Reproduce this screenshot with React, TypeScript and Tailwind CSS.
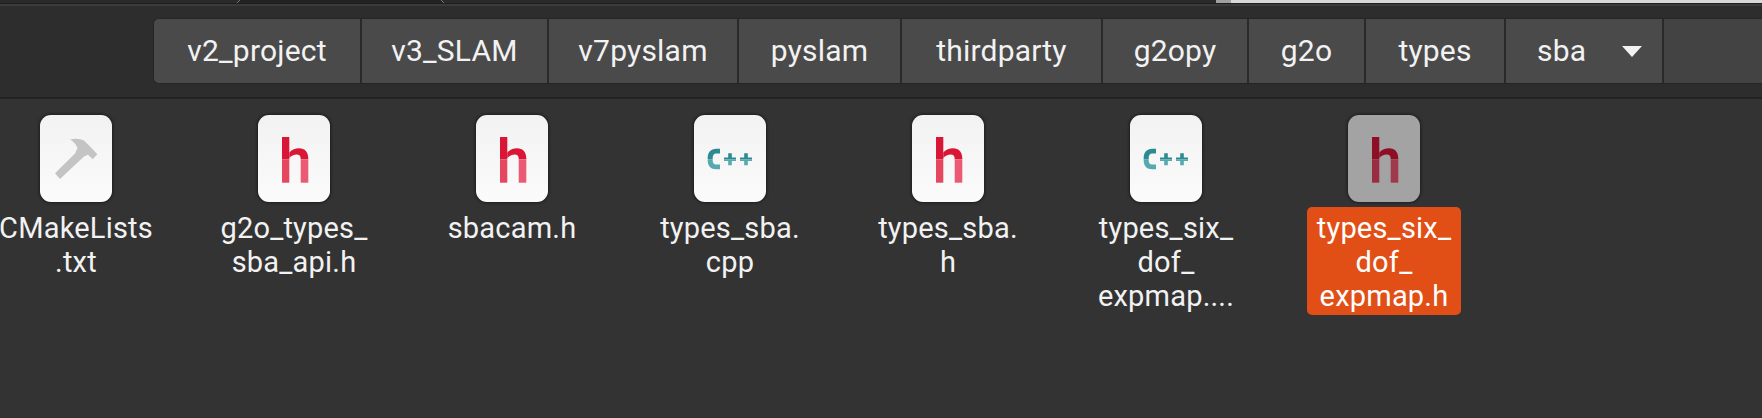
import React from 'react';

const segments = [
  { name: 'v2_project', width: 'w-[208px]' },
  { name: 'v3_SLAM', width: 'w-[187px]' },
  { name: 'v7pyslam', width: 'w-[190px]' },
  { name: 'pyslam', width: 'w-[163px]' },
  { name: 'thirdparty', width: 'w-[201px]' },
  { name: 'g2opy', width: 'w-[146px]' },
  { name: 'g2o', width: 'w-[117px]' },
  { name: 'types', width: 'w-[140px]' },
];

const HIcon = ({ top, bottom, right }: { top: string; bottom: string; right: string }) => (
  <svg width="72" height="87" viewBox="0 0 72 87">
    <path d="M24 22h7.3v11.8l0 10.5H24z" fill={top} />
    <path d="M31.3 37.5C34 34.6 37.5 33.3 41 33.3c6 0 9.3 4 9.3 10.5v.5h-7.6v-.5c0-2.800-1.500-4.200-3.900-4.200-2.900 0-5.800 1.500-7.500 3.500z" fill={top} />
    <path d="M24 44.300h7.300v23.400H24z" fill={bottom} />
    <path d="M42.700 44.300h7.600v23.400h-7.600z" fill={right} />
  </svg>
);

const CppIcon = () => (
  <svg width="72" height="87" viewBox="0 0 72 87">
    <path d="M26 33.700h-4c-5 0-8.300 3.800-8.300 8.800v1.800h5v-1.800c0-2.400 1.300-4.100 3.300-4.100h4z" fill="#2b8a92" />
    <path d="M13.700 44.300v1.500c0 5 3.300 8.500 8.300 8.500h4v-4.700h-4c-2 0-3.300-1.500-3.300-3.800v-1.500z" fill="#55a9af" />
    <path d="M34.200 38.300h3.600v6h-3.600zM30 42.500h12v1.800H30zM50.200 38.300h3.600v6h-3.600zM46 42.500h12v1.800H46z" fill="#2b8a92" />
    <path d="M34.200 44.300h3.600v6h-3.600zM30 44.300h12v1.800H30zM50.200 44.300h3.600v6h-3.600zM46 44.300h12v1.800H46z" fill="#55a9af" />
  </svg>
);

const HammerIcon = () => (
  <svg width="72" height="87" viewBox="0 0 72 87">
    <path
      d="M15 58.300L35 38.500L37.500 33Q35 27 30 24.500Q38 22.500 44 25.500L50.500 32L52 33.500L57.300 39.300L52.700 44.300L48 39.700L44 41.500L20 64Z"
      fill="#c4c4c4"
    />
  </svg>
);

const files: { lines: string[]; icon: React.ReactNode; selected?: boolean }[] = [
  { lines: ['CMakeLists', '.txt'], icon: <HammerIcon /> },
  { lines: ['g2o_types_', 'sba_api.h'], icon: <HIcon top="#da1636" bottom="#e5475f" right="#ea5a74" /> },
  { lines: ['sbacam.h'], icon: <HIcon top="#da1636" bottom="#e5475f" right="#ea5a74" /> },
  { lines: ['types_sba.', 'cpp'], icon: <CppIcon /> },
  { lines: ['types_sba.', 'h'], icon: <HIcon top="#da1636" bottom="#e5475f" right="#ea5a74" /> },
  { lines: ['types_six_', 'dof_', 'expmap....'], icon: <CppIcon /> },
  { lines: ['types_six_', 'dof_', 'expmap.h'], icon: <HIcon top="#8e0e25" bottom="#9a2c41" right="#9f3a4d" />, selected: true },
];

export default function App() {
  return (
    <div className="h-[418px] w-[1762px] overflow-hidden bg-[#333333] font-['Roboto',sans-serif] text-[#f2f2f2]">
      {/* window tabs strip */}
      <div className="flex h-[4px] border-b border-[#1e1e1e] bg-[#2a2a2a]">
        <div className="w-[237px]" />
        <svg width="207" height="3" viewBox="0 0 207 3" className="shrink-0">
          <path d="M3 0L0 3H207L204 0Z" fill="#232323" />
          <path d="M3 0L0 3M204 0L207 3" stroke="#777777" strokeWidth="1" />
        </svg>
        <div className="w-[772px]" />
        <div className="h-[3px] w-[15px] bg-[#a0a0a0]" />
        <div className="h-[3px] flex-1 bg-[#d8d8d8]" />
      </div>

      {/* toolbar */}
      <div className="h-[95px] border-t-2 border-b-2 border-t-[#3b3b3b] border-b-[#222222] bg-[#2d2d2d] pt-[12px]">
        <div className="ml-[153px] flex h-[66px] overflow-hidden rounded-l-[6px] border-y border-l border-[#252525] bg-[#434343] text-[30px] tracking-[0.2px]">
          {segments.map((s) => (
            <div
              key={s.name}
              className={`flex ${s.width} items-center justify-center border-r-[2px] border-[#2a2a2a] bg-[#4a4a4a] pb-[1px]`}
            >
              {s.name}
            </div>
          ))}
          <div className="flex w-[158px] items-center border-r-[2px] border-[#2a2a2a] bg-[#4a4a4a] pb-[1px] pl-[31px]">
            sba
            <svg width="20" height="11" viewBox="0 0 20 11" className="ml-[36px] mt-[1px]">
              <path d="M0 0H20L10 11Z" fill="#f2f2f2" />
            </svg>
          </div>
        </div>
      </div>

      {/* file grid */}
      <div className="-ml-[33px] flex pt-[16px]">
        {files.map((f) => (
          <div key={f.lines.join('')} className="flex w-[218px] shrink-0 flex-col items-center">
            <div
              className={`h-[87px] w-[72px] rounded-[11px] shadow-[0_0_3px_1px_rgba(0,0,0,0.45)] ${
                f.selected ? 'bg-[#a3a3a3]' : 'bg-gradient-to-b from-[#f2f2f2] to-[#fbfbfb]'
              }`}
            >
              {f.icon}
            </div>
            <div
              className={`mt-[5px] rounded-[5px] px-[7px] pb-[2px] pt-[4px] text-center text-[29px] leading-[34px] tracking-[0.2px] ${
                f.selected ? 'w-[154px] bg-[#e14f17] text-white' : ''
              }`}
            >
              {f.lines.map((l) => (
                <div key={l} className="whitespace-nowrap">
                  {l}
                </div>
              ))}
            </div>
          </div>
        ))}
      </div>
    </div>
  );
}
